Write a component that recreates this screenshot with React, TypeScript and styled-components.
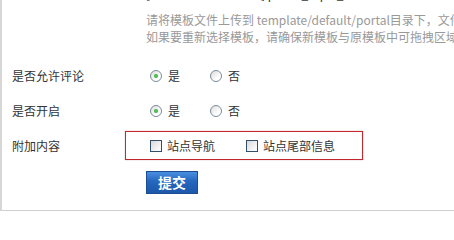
import React from 'react';
import styled, { createGlobalStyle } from 'styled-components';

const GlobalStyle = createGlobalStyle`
  html, body {
    margin: 0;
    padding: 0;
    background: #fff;
    overflow: hidden;
  }
  body {
    font-family: "Noto Sans CJK SC", "Liberation Sans", sans-serif;
    font-size: 12px;
    color: #333;
  }
`;

const Panel = styled.form`
  margin-top: -15px;
  border-left: 2px solid #d6d6d6;
  border-bottom: 1px solid #cfcfcf;
  padding: 0 0 16px 10px;
  overflow: hidden;
`;

const Row = styled.div<{ $height?: number }>`
  display: grid;
  grid-template-columns: 134px 1fr;
  align-items: center;
  height: ${(p) => (p.$height ? `${p.$height}px` : 'auto')};
`;

const TopBlock = styled.div`
  display: grid;
  grid-template-columns: 134px 1fr;
  padding-bottom: 13px;
`;

const Label = styled.div`
  line-height: 17px;
  color: #333;
  white-space: nowrap;
`;

const Value = styled.div`
  line-height: 17px;
  color: #333;
  white-space: nowrap;
`;

const Hint = styled.div`
  margin-top: 9px;
  color: #999;
  line-height: 17px;
  white-space: nowrap;
`;

const Options = styled.div`
  display: flex;
  align-items: center;
  padding-left: 4px;
`;

const Option = styled.label`
  display: inline-flex;
  align-items: center;
  flex-shrink: 0;
  gap: 6px;
  width: 60px;
  line-height: 17px;
  color: #333;
  white-space: nowrap;
`;

const Radio = styled.span<{ $checked?: boolean }>`
  position: relative;
  box-sizing: border-box;
  flex-shrink: 0;
  width: 12px;
  height: 12px;
  border-radius: 50%;
  border: 1px solid #7a8c99;
  background: linear-gradient(135deg, #dcdcdc 0%, #ffffff 70%);
  &::after {
    content: '';
    display: ${(p) => (p.$checked ? 'block' : 'none')};
    position: absolute;
    left: 3px;
    top: 3px;
    width: 4px;
    height: 4px;
    border-radius: 50%;
    background: radial-gradient(circle, #5fd35f 0%, #1f9a24 100%);
  }
`;

const ExtraBox = styled.div`
  display: flex;
  align-items: center;
  box-sizing: border-box;
  width: 238px;
  height: 29px;
  margin-left: -21px;
  padding-left: 24px;
  border: 1px solid #c1272d;
  box-shadow: 0 0 1px rgba(193, 39, 45, 0.5);
`;

const CheckOption = styled.label`
  display: inline-flex;
  align-items: center;
  flex-shrink: 0;
  gap: 5px;
  margin-right: 31px;
  line-height: 17px;
  color: #333;
  white-space: nowrap;
`;

const Checkbox = styled.span`
  box-sizing: border-box;
  flex-shrink: 0;
  width: 12px;
  height: 12px;
  border: 1px solid #33506a;
  background: linear-gradient(135deg, #d8d8d8 0%, #fafafa 80%);
`;

const ButtonRow = styled.div`
  padding: 8px 0 0 134px;
`;

const SubmitButton = styled.button`
  box-sizing: border-box;
  width: 52px;
  height: 23px;
  padding: 0;
  border: 1px solid #1a4d92;
  background: linear-gradient(to bottom, #4a8ee0 0%, #2566be 45%, #1d58aa 100%);
  color: #fff;
  font-family: "Noto Sans CJK SC", sans-serif;
  font-size: 14px;
  font-weight: bold;
  line-height: 21px;
  cursor: pointer;
`;

const radioRows = [
  { label: '是否允许评论', value: true },
  { label: '是否开启', value: true },
];

export default function App() {
  return (
    <>
      <GlobalStyle />
      <Panel onSubmit={(e) => e.preventDefault()}>
        <TopBlock>
          <Label>模板名</Label>
          <div>
            <Value>[ 门户首页 - 专题模板 ] portal_topic_content</Value>
            <Hint>
              请将模板文件上传到 template/default/portal目录下，文件名以 portal_topic_content_ 开头
              <br />
              如果要重新选择模板，请确保新模板与原模板中可拖拽区域的 ID 相同，否则会导致原有内容丢失
            </Hint>
          </div>
        </TopBlock>
        {radioRows.map((row) => (
          <Row key={row.label} $height={35}>
            <Label>{row.label}</Label>
            <Options>
              <Option>
                <Radio $checked={row.value} />是
              </Option>
              <Option>
                <Radio $checked={!row.value} />否
              </Option>
            </Options>
          </Row>
        ))}
        <Row $height={35}>
          <Label>附加内容</Label>
          <ExtraBox>
            <CheckOption>
              <Checkbox />站点导航
            </CheckOption>
            <CheckOption>
              <Checkbox />站点尾部信息
            </CheckOption>
          </ExtraBox>
        </Row>
        <ButtonRow>
          <SubmitButton type="submit">提交</SubmitButton>
        </ButtonRow>
      </Panel>
    </>
  );
}
